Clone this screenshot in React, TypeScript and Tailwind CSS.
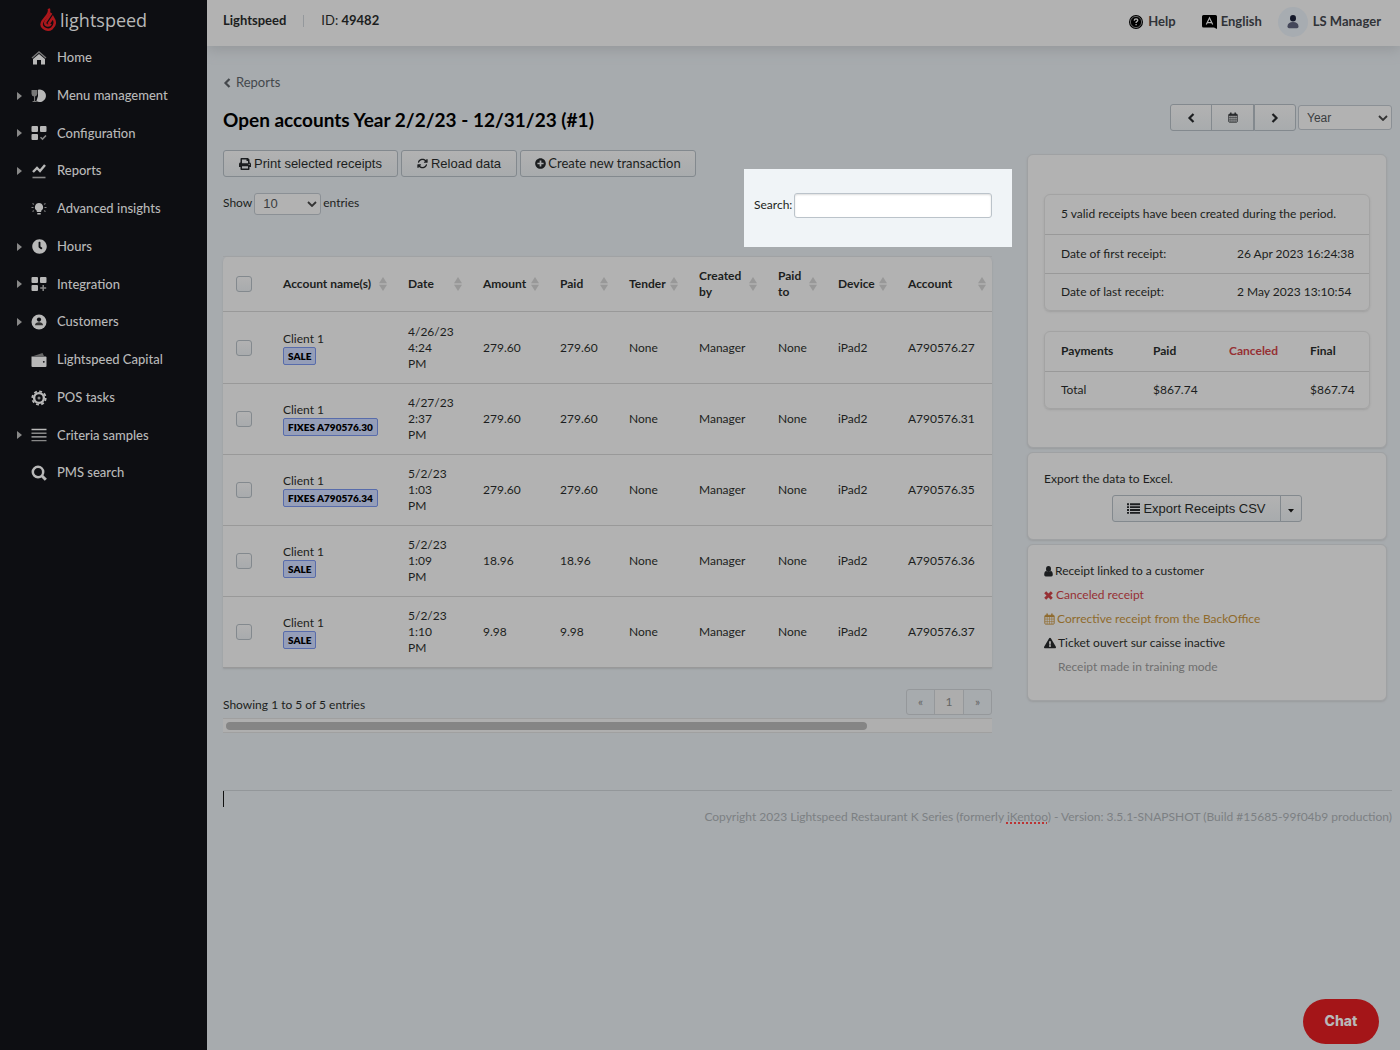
import type { ReactNode } from "react";
import { FaPrint, FaPlusCircle, FaExclamationTriangle, FaClock } from "react-icons/fa";
import { FaArrowsRotate } from "react-icons/fa6";

const HomeIcon = () => (
  <svg viewBox="0 0 16 16" className="size-4" fill="none">
    <path d="M1 8 8 2l7 6" stroke="#777" strokeWidth="1.4" />
    <path d="M8 4 2 9v5.5h4V10h4v4.5h4V9z" fill="#b8b8b8" />
  </svg>
);
const MenuIcon = () => (
  <svg viewBox="0 0 16 16" className="size-4">
    <path d="M7 1.800a6.200 6.200 0 1 1-1.600 11.200L7 8z" fill="#b8b8b8" />
    <path d="M.5 2h5.800v3.800a2.900 2.900 0 0 1-2.200 2.800V13h1.600v1H1.600v-1H3V8.600A2.900 2.900 0 0 1 .5 5.800z" fill="#777" />
  </svg>
);
const Squares = ({ extra }: { extra: string }) => (
  <svg viewBox="0 0 16 16" className="size-4">
    <g fill="#b8b8b8">
      <rect x=".5" y="1" width="6.500" height="6" rx="1" />
      <rect x="9" y="1" width="6.500" height="6" rx="1" />
      <rect x=".5" y="9" width="6.500" height="6" rx="1" />
    </g>
    <path d={extra} stroke="#888" strokeWidth="1.500" fill="none" />
  </svg>
);
const ReportsIcon = () => (
  <svg viewBox="0 0 16 16" className="size-4" fill="none">
    <path d="m2 9 4-4 3 3 5-6" stroke="#b8b8b8" strokeWidth="2.400" />
    <path d="M1.500 14.500h13" stroke="#888" strokeWidth="1.600" />
  </svg>
);
const BulbIcon = () => (
  <svg viewBox="0 0 16 16" className="size-4" fill="none">
    <path d="M8 2a4.200 4.200 0 0 0-2.200 7.700V11h4.400V9.700A4.200 4.200 0 0 0 8 2zM6.300 12h3.400v1.500H6.300z" fill="#b8b8b8" />
    <path d="M.5 6.500h2M13.500 6.500h2M1.500 2.500 3 3.400M14.500 2.500 13 3.400M1.500 10.500 3 9.600M14.500 10.500 13 9.600" stroke="#888" strokeWidth="1.100" />
  </svg>
);
const CustomerIcon = () => (
  <svg viewBox="0 0 16 16" className="size-4">
    <circle cx="8" cy="8" r="7.500" fill="#b8b8b8" />
    <circle cx="8" cy="5.600" r="2.100" fill="#0d0e12" />
    <path d="M4 11.200c0-2 1.500-3 4-3s4 1 4 3z" fill="#333" />
  </svg>
);
const WalletIcon = () => (
  <svg viewBox="0 0 16 16" className="size-4">
    <path d="m2.500 4 9-3 1.500 3z" fill="#666" />
    <path d="M.5 4.500h14a1 1 0 0 1 1 1V14a1 1 0 0 1-1 1h-13a1 1 0 0 1-1-1z" fill="#b8b8b8" />
    <circle cx="12.800" cy="9.800" r=".9" fill="#0d0e12" />
  </svg>
);
const GearIcon = () => (
  <svg viewBox="0 0 16 16" className="size-4" fill="none" stroke="#b8b8b8">
    <circle cx="8" cy="8" r="4.900" strokeWidth="2.400" />
    <circle cx="8" cy="8" r="6.700" strokeWidth="1.800" strokeDasharray="2.900 2.362" />
    <circle cx="8" cy="8" r="1.500" fill="#888" stroke="none" />
  </svg>
);
const LinesIcon = () => (
  <svg viewBox="0 0 16 16" className="size-4">
    <path d="M.5 2.500h15M.5 9.900h15" stroke="#b8b8b8" strokeWidth="1.400" />
    <path d="M.5 6.200h15M.5 13.600h15" stroke="#888" strokeWidth="1.400" />
  </svg>
);
const SearchIcon = () => (
  <svg viewBox="0 0 16 16" className="size-4" fill="none" stroke="#b8b8b8">
    <circle cx="7" cy="7" r="5.200" strokeWidth="2.500" />
    <path d="m10.800 10.800 4 4" strokeWidth="3" />
  </svg>
);
const CalendarIcon = ({ className }: { className: string }) => (
  <svg viewBox="0 0 12 13" className={className} fill="none" stroke="currentColor">
    <rect x=".9" y="2.500" width="10.200" height="9.600" rx=".8" strokeWidth="1" />
    <path d="M1 3.500h10" strokeWidth="1.800" />
    <path d="M3.400.5v2.500M8.600.5v2.500" strokeWidth="1.600" />
    <path d="M1 6.600h10M1 9.300h10M3.500 4v8M6 4v8M8.500 4v8" strokeWidth=".6" />
  </svg>
);
const Angle = ({ d, className }: { d: string; className: string }) => (
  <svg viewBox="0 0 8 10" className={className} fill="none" stroke="currentColor" strokeWidth="2.200">
    <path d={d} />
  </svg>
);
const LEFT = "M6.500 1 2.500 5l4 4";
const RIGHT = "m1.500 1 4 4-4 4";
const UserIcon = () => (
  <svg viewBox="0 0 9 11" className="h-[11px] w-[9px]" fill="currentColor">
    <ellipse cx="4.500" cy="3" rx="2.500" ry="2.900" />
    <path d="M.2 8.800Q.2 5 2.300 5q2.200 1.700 4.400 0 2.100 0 2.100 3.800 0 1.700-1.500 1.700H1.700Q.2 10.500.2 8.800z" />
  </svg>
);
const CrossIcon = () => (
  <svg viewBox="0 0 9 9" className="size-[9px]" stroke="currentColor" strokeWidth="2.800">
    <path d="m1.200 1.200 6.600 6.600M7.800 1.200 1.200 7.800" />
  </svg>
);
const ListIcon = () => (
  <svg viewBox="0 0 13 11" className="h-[11px] w-[13px]" stroke="currentColor" strokeWidth="1.900">
    <path d="M0 1.200h2M0 4.100h2M0 7h2M0 9.900h2M3 1.200h10M3 4.100h10M3 7h10M3 9.900h10" />
  </svg>
);

const nav: { label: string; icon: ReactNode; sub?: boolean }[] = [
  { label: "Home", icon: <HomeIcon /> },
  { label: "Menu management", icon: <MenuIcon />, sub: true },
  { label: "Configuration", icon: <Squares extra="m9.500 12.300 2 1.800 3.500-3.600" />, sub: true },
  { label: "Reports", icon: <ReportsIcon />, sub: true },
  { label: "Advanced insights", icon: <BulbIcon /> },
  { label: "Hours", icon: <FaClock className="size-[15px]" />, sub: true },
  { label: "Integration", icon: <Squares extra="M12.200 9v6M9.200 12h6" />, sub: true },
  { label: "Customers", icon: <CustomerIcon />, sub: true },
  { label: "Lightspeed Capital", icon: <WalletIcon /> },
  { label: "POS tasks", icon: <GearIcon /> },
  { label: "Criteria samples", icon: <LinesIcon />, sub: true },
  { label: "PMS search", icon: <SearchIcon /> },
];

const columns = [
  { title: "Account name(s)", width: "w-[125px]" },
  { title: "Date", width: "w-[75px]" },
  { title: "Amount", width: "w-[77px]" },
  { title: "Paid", width: "w-[69px]" },
  { title: "Tender", width: "w-[70px]" },
  { title: "Created by", width: "w-[79px]" },
  { title: "Paid to", width: "w-[60px]" },
  { title: "Device", width: "w-[70px]" },
  { title: "Account", width: "w-[99px]" },
];

const rows = [
  { tag: "SALE", date: ["4/26/23", "4:24", "PM"], amount: "279.60", account: "A790576.27" },
  { tag: "FIXES A790576.30", date: ["4/27/23", "2:37", "PM"], amount: "279.60", account: "A790576.31" },
  { tag: "FIXES A790576.34", date: ["5/2/23", "1:03", "PM"], amount: "279.60", account: "A790576.35" },
  { tag: "SALE", date: ["5/2/23", "1:09", "PM"], amount: "18.96", account: "A790576.36" },
  { tag: "SALE", date: ["5/2/23", "1:10", "PM"], amount: "9.98", account: "A790576.37" },
];

const button =
  "flex h-[27px] items-center justify-center border border-[#83898e] bg-linear-to-b from-[#b2b2b2] to-[#a8abad] text-[#1c1e20]";
const card = "rounded-md border border-[#9fa1a3] bg-[#b2b2b2] shadow-[0_1px_2px_#989b9d]";
const innerTable = "w-full rounded-md border border-[#a3a3a3] shadow-[0_1px_2px_#9f9f9f]";

const Sort = () => (
  <svg viewBox="0 0 8 14" className="h-[14px] w-2 shrink-0" fill="#989898">
    <path d="M4 0 8 6.200H0zM4 14 0 7.800h8z" />
  </svg>
);

const Check = ({ label }: { label: string }) => (
  <input
    type="checkbox"
    aria-label={label}
    className="block size-4 appearance-none rounded-[3px] border border-[#83898e] bg-linear-to-b from-[#b2b2b2] to-[#a8abad]"
  />
);

const Chevron = () => (
  <svg viewBox="0 0 10 6" className="pointer-events-none absolute right-1 h-[6px] w-[10px]" fill="none">
    <path d="m1 1 4 4 4-4" stroke="#333" strokeWidth="1.800" />
  </svg>
);

function Sidebar() {
  return (
    <aside className="relative z-10 w-[207px] shrink-0 bg-[#0d0e12] text-[#b8b8b8]">
      <a href="#" className="flex h-[39px] items-start gap-1 pt-2 pl-10">
        <svg viewBox="0 0 16 24" className="h-6 w-4" fill="none" stroke="#ab171c" strokeWidth="2.500">
          <path d="M8.800.6Q9.800 4 7.500 7L2.800 13Q0 17.200 3.600 20q4.400 3.400 8.400.2 4-3.700 2.200-8.200l-1.400-2.500L8.500 16" />
          <path d="M11.300 5 5.800 13.200q-1.600 2.800 1 4.200 2.600.8 4-1.600" />
        </svg>
        <span className="font-['Open_Sans','Noto_Sans',sans-serif] text-lg leading-6 font-medium">lightspeed</span>
      </a>
      <nav className="grid h-[453px] auto-rows-fr">
        {nav.map((item) => (
          <a key={item.label} href="#" className="flex items-center pl-[17px] text-[13px] font-medium">
            <span className="w-[14px]">
              {item.sub && (
                <svg viewBox="0 0 5 8" className="h-2 w-[5px]" fill="#888">
                  <path d="M0 0 5 4 0 8z" />
                </svg>
              )}
            </span>
            <span className="mr-[10px] flex w-4 justify-center">{item.icon}</span>
            {item.label}
          </a>
        ))}
      </nav>
    </aside>
  );
}

function Header() {
  return (
    <header className="flex h-[46px] items-center justify-between bg-[#b2b2b2] pr-[19px] pb-1 pl-4 text-[13px] shadow-[0_4px_12px_#95989b]">
      <div className="flex items-center">
        <strong>Lightspeed</strong>
        <span className="mx-[17px] h-3 w-px bg-[#94989c]" />
        <span>
          ID: <strong>49482</strong>
        </span>
      </div>
      <div className="flex items-center pt-[2px] font-bold text-[#303338]">
        <a href="#" className="flex items-center">
          <svg viewBox="0 0 14 14" className="mr-[5px] size-[14px]">
            <circle cx="7" cy="7" r="7" fill="#000" />
            <circle cx="7" cy="7" r="5.600" fill="none" stroke="#aaa" strokeWidth=".6" />
            <path d="M5.200 5.600q.1-1.800 1.900-1.800 1.700.1 1.700 1.500 0 .9-1.700 1.900v.8M7.100 9v1.300" fill="none" stroke="#b2b2b2" strokeWidth="1.300" />
          </svg>
          Help
        </a>
        <a href="#" className="ml-[26px] flex items-center">
          <svg viewBox="0 0 15 14" className="mr-1 h-[14px] w-[15px]">
            <path d="M1.500 0h12A1.500 1.500 0 0 1 15 1.500V14l-3-1.500H1.500A1.500 1.500 0 0 1 0 11V1.500A1.500 1.500 0 0 1 1.500 0z" fill="#000" />
            <path d="m4.300 9.500 3.200-6.700 3.200 6.700M5.500 7.600h4" stroke="#b2b2b2" strokeWidth="1.200" fill="none" />
          </svg>
          English
        </a>
        <button className="ml-4 flex items-center gap-[5px] font-bold">
          <span className="flex size-[30px] items-center justify-center rounded-full bg-[#a7acb1]">
            <svg viewBox="0 0 12 14" className="h-[14px] w-3">
              <ellipse cx="6" cy="3.300" rx="3" ry="3.200" fill="#14182a" />
              <path d="M.5 11.500c0-3 2-4.500 5.500-4.500s5.500 1.500 5.500 4.500q0 1.700-1.500 1.700H2Q.5 13.200.5 11.500z" fill="#44475a" />
            </svg>
          </span>
          LS Manager
        </button>
      </div>
    </header>
  );
}

function Receipts() {
  return (
    <section className="min-w-0 flex-1">
      <div className="flex h-[106px] justify-between">
        <div>
          <div className="flex gap-[3px] text-[13px]">
            <button className={`${button} w-[175px] gap-[3px] rounded-[3px] font-['Liberation_Sans',Arial,sans-serif]`}>
              <FaPrint className="size-3" />
              Print selected receipts
            </button>
            <button className={`${button} w-[116px] gap-[3px] rounded-[3px] font-['Liberation_Sans',Arial,sans-serif]`}>
              <FaArrowsRotate className="size-[11px]" />
              Reload data
            </button>
            <a href="#" className={`${button} w-[176px] gap-[2px] rounded-[3px]`}>
              <FaPlusCircle className="size-[11px]" />
              Create new transaction
            </a>
          </div>
          <label className="mt-4 flex items-start gap-[2px] leading-5">
            Show
            <span className="relative flex items-center">
              <select className="h-[22px] w-[67px] appearance-none rounded-[3px] border border-[#8b9095] bg-[#b2b2b2] pl-2 font-['Liberation_Sans',Arial,sans-serif] text-[13px] text-[#3a3d40]">
                <option>10</option>
              </select>
              <Chevron />
            </span>
            entries
          </label>
        </div>
        <div className="mt-[19px] -mr-5 flex h-[78px] w-[268px] items-start bg-[#f0f4f7] pt-6 pl-[10px]">
          <label className="flex items-start gap-[2px] leading-6">
            Search:
            <input
              type="search"
              className="h-[25px] w-[198px] rounded-[3px] border border-[#bbc3ca] bg-white shadow-[inset_0_1px_2px_#ddd]"
            />
          </label>
        </div>
      </div>

      <table className="w-full table-fixed rounded-t-md bg-[#b2b2b2] text-left shadow-[0_1px_2px_#94979a]">
        <thead>
          <tr className="h-[55px] border-t border-b border-t-[#a0a2a4] border-b-[#999]">
            <th className="w-[45px] pl-[13px]">
              <Check label="Select all" />
            </th>
            {columns.map((c) => (
              <th key={c.title} className={`${c.width} pr-[6px] pl-[15px]`}>
                <div className="flex items-center justify-between">
                  {c.title}
                  <Sort />
                </div>
              </th>
            ))}
          </tr>
        </thead>
        <tbody>
          {rows.map((r) => (
            <tr key={r.account} className="h-[71px] border-b border-[#999] first:h-[72px]">
              <td className="pl-[13px]">
                <Check label={`Select ${r.account}`} />
              </td>
              <td className="pl-[15px]">
                Client 1
                <span className="block w-fit rounded-[2px] border border-[#586cab] bg-[#959eb8] px-1 text-[10px] leading-4 font-extrabold text-black">
                  {r.tag}
                </span>
              </td>
              <td className="pl-[15px]">
                {r.date.map((d) => (
                  <div key={d}>{d}</div>
                ))}
              </td>
              <td className="pl-[15px]">{r.amount}</td>
              <td className="pl-[15px]">{r.amount}</td>
              <td className="pl-[15px]">None</td>
              <td className="pl-[15px]">Manager</td>
              <td className="pl-[15px]">None</td>
              <td className="pl-[15px]">iPad2</td>
              <td className="pl-[15px]">{r.account}</td>
            </tr>
          ))}
        </tbody>
      </table>

      <div className="mt-[21px] flex h-[29px] justify-between">
        <span className="pt-2">Showing 1 to 5 of 5 entries</span>
        <div className="flex h-[26px] rounded-[3px] border border-[#95989b] text-[#666]">
          <button className="w-[27px]">«</button>
          <button className="w-[30px] border-x border-[#95989b] bg-[#adadad]">1</button>
          <button className="w-[27px]">»</button>
        </div>
      </div>
      <div className="h-[15px] border-y border-[#a0a0a0] bg-[#afafaf] px-[3px] pt-[3px]">
        <div className="h-2 w-[84%] rounded-full bg-[#858585]" />
      </div>
    </section>
  );
}

function Summary() {
  return (
    <aside className="mt-1 mr-[5px] flex w-[360px] shrink-0 flex-col gap-1">
      <div className={`${card} h-[294px] px-4 pt-[39px]`}>
        <div className={innerTable}>
          <table className="w-full table-fixed">
            <tbody>
              <tr className="h-[39px] border-b border-[#999]">
                <td colSpan={2} className="pl-4">5 valid receipts have been created during the period.</td>
              </tr>
              <tr className="h-[39px] border-b border-[#999]">
                <td className="pl-4">Date of first receipt:</td>
                <td className="pl-[30px]">26 Apr 2023 16:24:38</td>
              </tr>
              <tr className="h-[37px]">
                <td className="pl-4">Date of last receipt:</td>
                <td className="pl-[30px]">2 May 2023 13:10:54</td>
              </tr>
            </tbody>
          </table>
        </div>
        <div className={`${innerTable} mt-5`}>
          <table className="w-full table-fixed text-left">
            <thead>
              <tr className="h-[39px] border-b border-[#999]">
                <th className="w-[92px] pl-4">Payments</th>
                <th className="w-[76px] pl-4">Paid</th>
                <th className="w-[81px] pl-4 text-[#963034]">Canceled</th>
                <th className="pl-4">Final</th>
              </tr>
            </thead>
            <tbody>
              <tr className="h-[37px]">
                <td className="pl-4">Total</td>
                <td className="pl-4">$867.74</td>
                <td />
                <td className="pl-4">$867.74</td>
              </tr>
            </tbody>
          </table>
        </div>
      </div>

      <div className={`${card} h-[88px] px-4 pt-[18px]`}>
        <p>Export the data to Excel.</p>
        <div className="mt-2 flex justify-center font-['Liberation_Sans',Arial,sans-serif] text-[13px]">
          <button className={`${button} w-[169px] gap-[3px] rounded-l-[3px]`}>
            <ListIcon />
            Export Receipts CSV
          </button>
          <button aria-label="More export options" className={`${button} -ml-px w-[22px] rounded-r-[3px] pt-1`}>
            <svg viewBox="0 0 6 4" className="h-1 w-[6px]">
              <path d="M0 0h6L3 3.500z" fill="#111" />
            </svg>
          </button>
        </div>
      </div>

      <ul className={`${card} h-[157px] px-4 pt-[14px] leading-6`}>
        <li className="flex items-center gap-[2px]">
          <UserIcon />
          Receipt linked to a customer
        </li>
        <li className="flex items-center gap-[3px] text-[#963034]">
          <CrossIcon />
          Canceled receipt
        </li>
        <li className="flex items-center gap-[2px] text-[#8f6a2c]">
          <CalendarIcon className="h-3 w-[11px]" />
          Corrective receipt from the BackOffice
        </li>
        <li className="flex items-center gap-[2px]">
          <FaExclamationTriangle className="size-3" />
          Ticket ouvert sur caisse inactive
        </li>
        <li className="pl-[14px] text-[#6f6f6f]">Receipt made in training mode</li>
      </ul>
    </aside>
  );
}

export default function App() {
  return (
    <div className="flex min-h-screen bg-[#a7abae] font-[Lato,sans-serif] text-xs text-[#1c1e20]">
      <Sidebar />
      <div className="min-w-0 flex-1">
        <Header />
        <main className="pr-2 pl-4">
          <a href="#" className="flex h-[58px] items-center gap-[5px] pt-4 text-[13px] text-[#44484c]">
            <Angle d={LEFT} className="h-[10px] w-2" />
            Reports
          </a>
          <div className="flex h-[46px] items-start justify-between">
            <h1 className="text-[19px] leading-8 font-bold text-black">Open accounts Year 2/2/23 - 12/31/23 (#1)</h1>
            <div className="flex items-center">
              <button aria-label="Previous period" className={`${button} w-[42px] rounded-l-[3px]`}>
                <Angle d={LEFT} className="h-[10px] w-2" />
              </button>
              <button aria-label="Pick a date" className={`${button} -ml-px w-[43px]`}>
                <CalendarIcon className="h-[11px] w-[10px]" />
              </button>
              <button aria-label="Next period" className={`${button} w-[42px] rounded-r-[3px]`}>
                <Angle d={RIGHT} className="h-[10px] w-2" />
              </button>
              <span className="relative ml-[2px] flex items-center">
                <select
                  aria-label="Period"
                  className="h-[25px] w-[94px] appearance-none rounded-[3px] border border-[#8b9095] bg-[#b2b2b2] pl-2 font-['Liberation_Sans',Arial,sans-serif] text-xs text-[#3a3d40]"
                >
                  <option>Year</option>
                </select>
                <Chevron />
              </span>
            </div>
          </div>
          <div className="flex gap-[35px]">
            <Receipts />
            <Summary />
          </div>
          <footer className="mt-[57px] border-t border-[#93979a]">
            <div className="h-4 w-px bg-[#111]" />
            <p className="mt-[2px] text-right text-[#7c8083]">
              Copyright 2023 Lightspeed Restaurant K Series (formerly{" "}
              <span className="underline decoration-[#b33] decoration-dotted decoration-2">iKentoo</span>) - Version:
              3.5.1-SNAPSHOT (Build #15685-99f04b9 production)
            </p>
          </footer>
        </main>
        <button className="fixed right-[21px] bottom-[6px] h-[45px] w-[76px] rounded-full bg-[#a41518] pb-[2px] font-[Inter,sans-serif] text-sm font-extrabold text-[#b8b8b8]">
          Chat
        </button>
      </div>
    </div>
  );
}
